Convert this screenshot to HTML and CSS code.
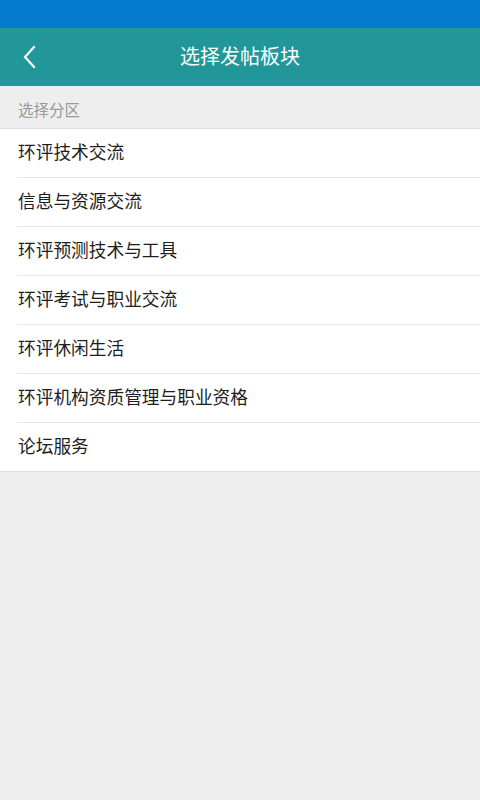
FILE: index.html
```html
<!DOCTYPE html>
<html lang="zh-CN">
<head>
<meta charset="utf-8">
<title>选择发帖板块</title>
<link rel="stylesheet" href="styles.css">
</head>
<body>
<div class="statusbar"></div>
<header class="toolbar">
  <span class="back">
    <svg width="14" height="24" viewBox="0 0 14 24"><path d="M12 2 L3 12 L12 22" fill="none" stroke="#fff" stroke-width="2.2" stroke-linecap="square"/></svg>
  </span>
  <h1 class="title">选择发帖板块</h1>
</header>
<div class="section">选择分区</div>
<ul class="list">
  <li class="item">环评技术交流</li>
  <li class="item">信息与资源交流</li>
  <li class="item">环评预测技术与工具</li>
  <li class="item">环评考试与职业交流</li>
  <li class="item">环评休闲生活</li>
  <li class="item">环评机构资质管理与职业资格</li>
  <li class="item">论坛服务</li>
</ul>
</body>
</html>
```
FILE: styles.css
```css
* { box-sizing: border-box; }
html, body { margin: 0; padding: 0; }
body {
  width: 480px;
  height: 800px;
  background: #eeeeee;
  font-family: "Noto Sans CJK SC", "Noto Sans", sans-serif;
  overflow: hidden;
}
.statusbar {
  height: 28px;
  background: #0479cd;
}
.toolbar {
  height: 58px;
  background: #21979a;
  display: flex;
  align-items: center;
  justify-content: center;
  position: relative;
}
.back {
  position: absolute;
  left: 22px;
  top: 17px;
  display: flex;
}
.title {
  margin: 0 0 2px;
  color: #fff;
  font-size: 20px;
  font-weight: normal;
  line-height: 1;
}
.section {
  height: 43px;
  padding-left: 18px;
  padding-top: 3px;
  display: flex;
  align-items: center;
  font-size: 15.5px;
  color: #999999;
  border-bottom: 1px solid #dcdcdc;
}
.list {
  list-style: none;
  margin: 0;
  padding: 0;
  background: #fff;
  border-bottom: 1px solid #dcdcdc;
}
.item {
  height: 49px;
  margin-left: 17px;
  padding-left: 1px;
  padding-bottom: 4px;
  display: flex;
  align-items: center;
  font-size: 17.7px;
  color: #1e1e1e;
  border-bottom: 1px solid #e6e6e6;
}
.item:last-child {
  border-bottom: none;
  height: 48px;
}
```
